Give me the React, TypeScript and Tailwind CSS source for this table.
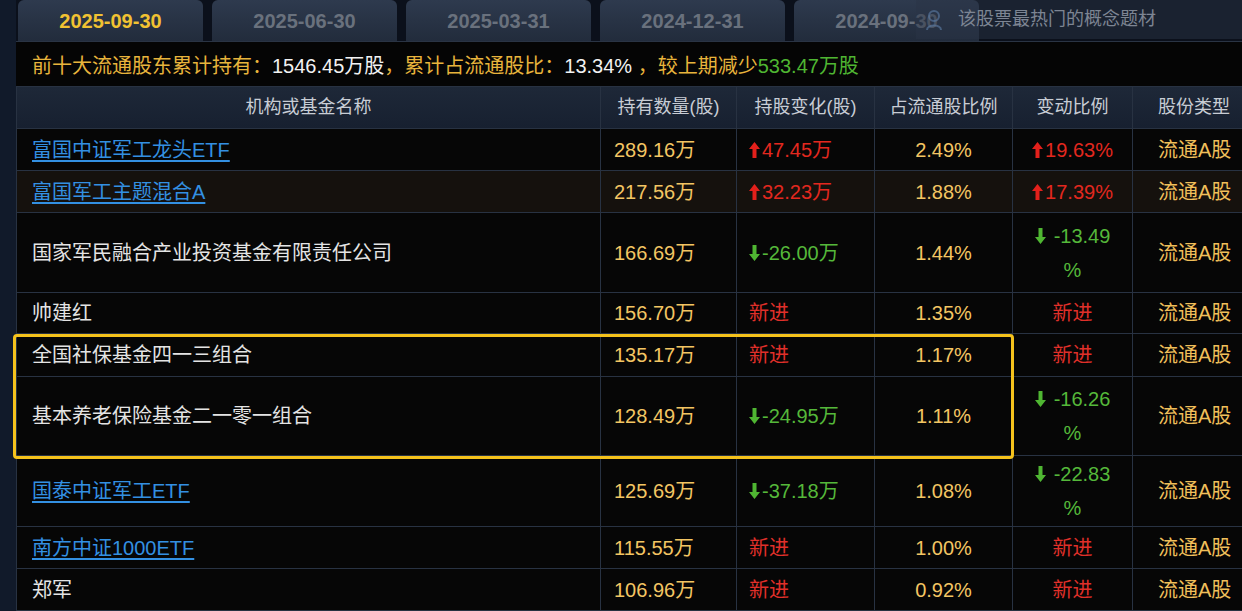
import React from "react"

type Change = { dir: "up" | "down"; text: string } | "new"

type Row = {
  name: string
  link?: boolean
  hold: string
  change: Change
  ratio: string
  pct: Change
  pctWrap?: boolean
  h: string
  bg?: string
}

const rows: Row[] = [
  { name: "富国中证军工龙头ETF", link: true, hold: "289.16万", change: { dir: "up", text: "47.45万" }, ratio: "2.49%", pct: { dir: "up", text: "19.63%" }, h: "h-[42px]" },
  { name: "富国军工主题混合A", link: true, hold: "217.56万", change: { dir: "up", text: "32.23万" }, ratio: "1.88%", pct: { dir: "up", text: "17.39%" }, h: "h-[42px]", bg: "bg-[#15110d]" },
  { name: "国家军民融合产业投资基金有限责任公司", hold: "166.69万", change: { dir: "down", text: "-26.00万" }, ratio: "1.44%", pct: { dir: "down", text: "-13.49" }, pctWrap: true, h: "h-[80px]" },
  { name: "帅建红", hold: "156.70万", change: "new", ratio: "1.35%", pct: "new", h: "h-[41px]" },
  { name: "全国社保基金四一三组合", hold: "135.17万", change: "new", ratio: "1.17%", pct: "new", h: "h-[43px]" },
  { name: "基本养老保险基金二一零一组合", hold: "128.49万", change: { dir: "down", text: "-24.95万" }, ratio: "1.11%", pct: { dir: "down", text: "-16.26" }, pctWrap: true, h: "h-[79px]" },
  { name: "国泰中证军工ETF", link: true, hold: "125.69万", change: { dir: "down", text: "-37.18万" }, ratio: "1.08%", pct: { dir: "down", text: "-22.83" }, pctWrap: true, h: "h-[71px]" },
  { name: "南方中证1000ETF", link: true, hold: "115.55万", change: "new", ratio: "1.00%", pct: "new", h: "h-[42px]" },
  { name: "郑军", hold: "106.96万", change: "new", ratio: "0.92%", pct: "new", h: "h-[42px]" },
]

const tabs = ["2025-09-30", "2025-06-30", "2025-03-31", "2024-12-31", "2024-09-30"]

function Arrow({ dir }: { dir: "up" | "down" }) {
  const up = dir === "up"
  return (
    <svg width="11" height="16" viewBox="0 0 11 16" className="shrink-0">
      {up ? (
        <path d="M5.5 0 L11 7 L7.5 7 L7.5 16 L3.5 16 L3.5 7 L0 7 Z" fill="#e3201b" />
      ) : (
        <path d="M3.5 0 L7.5 0 L7.5 9 L11 9 L5.5 16 L0 9 L3.5 9 Z" fill="#4fb632" />
      )}
    </svg>
  )
}

function ChangeCell({ c }: { c: Change }) {
  if (c === "new") return <span className="text-[#e0302a]">新进</span>
  return (
    <span className={`flex items-center gap-[2px] ${c.dir === "up" ? "text-[#e3281f]" : "text-[#55b83a]"}`}>
      <Arrow dir={c.dir} />
      {c.text}
    </span>
  )
}

function PctCell({ r }: { r: Row }) {
  const c = r.pct
  if (c === "new") return <span className="text-[#e0302a]">新进</span>
  if (r.pctWrap)
    return (
      <div className="flex flex-col items-center leading-[34px] text-[#55b83a]">
        <span className="flex items-center gap-[8px]">
          <Arrow dir="down" />
          {c.text}
        </span>
        <span>%</span>
      </div>
    )
  return <ChangeCell c={c} />
}

const cell = "border-r border-b border-[#283242] flex items-center"
const head = "border-r border-b border-[#283242] flex items-center bg-gradient-to-b from-[#1e2838] to-[#172030] text-[18px] text-[#c8cdd5]"

export default function App() {
  return (
    <div
      className="w-[1242px] h-[611px] overflow-hidden bg-[#0f1726] flex relative"
      style={{ fontFamily: '"Liberation Sans", "Noto Sans CJK SC", sans-serif' }}
    >
      <div className="w-[16px] shrink-0 bg-[#111a2a]" />
      <div className="flex-1 flex flex-col">
        {/* tabs */}
        <div className="h-[43px] flex gap-[9px] pl-[2px] bg-[#0b101b]">
          {tabs.map((t, i) => (
            <div
              key={t}
              className={`w-[185px] h-[41px] rounded-t-[6px] flex items-center justify-center text-[20px] font-bold bg-gradient-to-b from-[#2e3a4e] to-[#222c3c] ${
                i === 0 ? "text-[#f1c232]" : "text-[#69717d]"
              }`}
            >
              {t}
            </div>
          ))}
        </div>

        {/* summary */}
        <div className="h-[46px] bg-[#050505] border-t border-[#2a3444] flex items-center pl-[16px] pt-[3px] text-[20px] text-[#e8b43c] whitespace-nowrap">
          前十大流通股东累计持有：<span className="text-[#f2f2f2]">1546.45万股</span>，累计占流通股比：
          <span className="text-[#f2f2f2]">13.34%</span>&nbsp;，较上期减少
          <span className="text-[#4fb632]">533.47万股</span>
        </div>

        {/* table */}
        <div className="grid grid-cols-[584px_136px_138px_138px_120px_110px] border-t border-l border-[#283242]">
          <div className={`${head} h-[42px] justify-center`}>机构或基金名称</div>
          <div className={`${head} justify-center`}>持有数量(股)</div>
          <div className={`${head} justify-center`}>持股变化(股)</div>
          <div className={`${head} justify-center`}>占流通股比例</div>
          <div className={`${head} justify-center`}>变动比例</div>
          <div className={`${head} pl-[25px]`}>股份类型</div>

          {rows.map((r) => {
            const bg = r.bg ?? "bg-[#060606]"
            return (
              <React.Fragment key={r.name}>
                <div className={`${cell} ${r.h} ${bg} pl-[15px] text-[20px] ${r.link ? "text-[#3390e2] underline underline-offset-[3px]" : "text-[#e4e4e4]"}`}>
                  {r.name}
                </div>
                <div className={`${cell} ${bg} pl-[13px] text-[20px] text-[#f3c563]`}>{r.hold}</div>
                <div className={`${cell} ${bg} pl-[12px] text-[20px]`}>
                  <ChangeCell c={r.change} />
                </div>
                <div className={`${cell} ${bg} justify-center text-[20px] text-[#f3c563]`}>{r.ratio}</div>
                <div className={`${cell} ${bg} justify-center text-[20px]`}>
                  <PctCell r={r} />
                </div>
                <div className={`${cell} ${bg} pl-[25px] text-[20px] text-[#f0bf5a]`}>流通A股</div>
              </React.Fragment>
            )
          })}
        </div>
      </div>

      {/* highlight box */}
      <div className="absolute left-[13px] top-[334px] w-[1001px] h-[125px] border-[3px] border-[#f5c21c] rounded-[4px] pointer-events-none" />

      {/* tooltip overlay */}
      <div className="absolute left-[916px] top-0 w-[330px] h-[39px] bg-[#2a3446]/50 flex items-center gap-[14px] pl-[8px]">
        <svg width="20" height="22" viewBox="0 0 20 22" className="opacity-60">
          <circle cx="10" cy="7" r="5" fill="none" stroke="#5d7da6" strokeWidth="2" />
          <path d="M3 21 C3 15 17 15 17 21" fill="none" stroke="#5d7da6" strokeWidth="2" />
        </svg>
        <span className="text-[18px] text-[#7d8593]">该股票最热门的概念题材</span>
      </div>
    </div>
  )
}
